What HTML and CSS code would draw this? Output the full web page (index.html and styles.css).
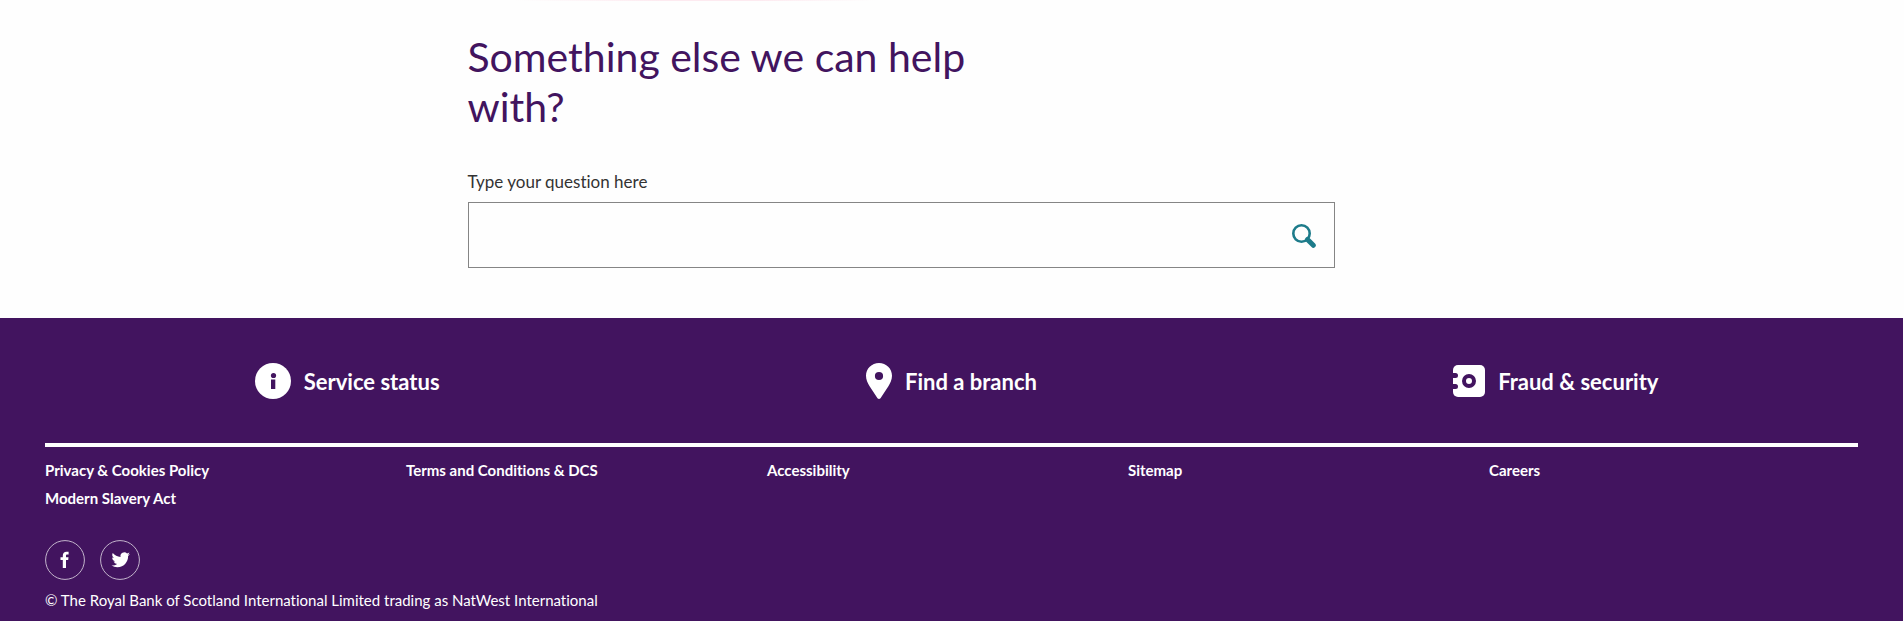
FILE: index.html
```html
<!DOCTYPE html>
<html lang="en">
<head>
<meta charset="utf-8">
<meta name="viewport" content="width=device-width, initial-scale=1">
<title>Support Centre</title>
<link rel="stylesheet" href="styles.css">
</head>
<body>
<main class="support">
  <form class="search">
    <h2 class="search-title">Something else we can help with?</h2>
    <label class="search-label" for="question">Type your question here</label>
    <div class="search-box">
      <input class="search-input" id="question" type="text">
      <button class="search-button" type="submit" aria-label="Search">
        <svg width="24" height="24" viewBox="0 0 24 24" aria-hidden="true"><circle cx="9.500" cy="9.500" r="8.200" fill="none" stroke="#1d7b8a" stroke-width="2.600"/><path d="M15.500 15.500l5.800 5.800" fill="none" stroke="#1d7b8a" stroke-width="5" stroke-linecap="round"/></svg>
      </button>
    </div>
  </form>
</main>
<footer class="footer">
  <nav class="quick" aria-label="Quick links">
    <a class="quick-link" href="#">
      <svg width="36" height="36" viewBox="0 0 36 36" aria-hidden="true"><circle cx="18" cy="18" r="18" fill="#fff"/><circle cx="18.500" cy="12.500" r="2.600" fill="#42145f"/><path d="M16 16.500h4.300v9.500h-4.300z" fill="#42145f"/></svg>
      Service status
    </a>
    <a class="quick-link" href="#">
      <svg width="26" height="36" viewBox="0 0 26 36" aria-hidden="true"><path fill="#fff" fill-rule="evenodd" d="M13 0C5.800 0 0 5.600 0 12.800c0 3.700 1.600 7.200 3.600 10.500L11.500 35.300q1.500 1.400 3 0L22.400 23.300c2-3.300 3.600-6.800 3.600-10.500C26 5.600 20.200 0 13 0zm0 8.900a4.100 4.100 0 1 1 0 8.200 4.100 4.100 0 0 1 0-8.200z"/></svg>
      Find a branch
    </a>
    <a class="quick-link" href="#">
      <svg width="32" height="32" viewBox="0 0 32 32" aria-hidden="true"><rect width="32" height="32" rx="5" fill="#fff"/><path d="M0 8h2.500a1.500 1.500 0 0 1 0 5H0zM0 19h2.500a1.500 1.500 0 0 1 0 5H0z" fill="#42145f"/><circle cx="16" cy="16" r="5" fill="#fff" stroke="#42145f" stroke-width="4"/></svg>
      Fraud &amp; security
    </a>
  </nav>
  <nav class="legal" aria-label="Legal">
    <a class="legal-link" href="#">Privacy &amp; Cookies Policy</a>
    <a class="legal-link" href="#">Terms and Conditions &amp; DCS</a>
    <a class="legal-link" href="#">Accessibility</a>
    <a class="legal-link" href="#">Sitemap</a>
    <a class="legal-link" href="#">Careers</a>
    <a class="legal-link" href="#">Modern Slavery Act</a>
  </nav>
  <div class="social">
    <a class="social-link" href="#" aria-label="Facebook">
      <svg width="40" height="40" viewBox="0 0 40 40" aria-hidden="true"><circle cx="20" cy="20" r="19.400" fill="none" stroke="#c3b5cc" stroke-width="1"/><path fill="#fff" d="M17.800 28v-8h-2.300v-2.700h2.300v-1.600c0-2.600 1.400-3.900 3.800-3.900h2v2.700h-1.300c-1 0-1.300.5-1.300 1.300v1.500h2.500l-.3 2.700H21V28z"/></svg>
    </a>
    <a class="social-link" href="#" aria-label="Twitter">
      <svg width="40" height="40" viewBox="0 0 40 40" aria-hidden="true"><circle cx="20" cy="20" r="19.400" fill="none" stroke="#c3b5cc" stroke-width="1"/><path fill="#fff" transform="translate(11.500 10.500) scale(.77)" d="M23.950 4.570a10 10 0 0 1-2.820.77 4.960 4.960 0 0 0 2.160-2.720c-.95.550-2 .950-3.130 1.180a4.920 4.920 0 0 0-8.380 4.480C7.690 8.090 4.070 6.130 1.640 3.160a4.820 4.820 0 0 0-.67 2.480c0 1.710.87 3.210 2.190 4.100a4.900 4.900 0 0 1-2.230-.62v.06a4.920 4.920 0 0 0 3.950 4.830 5 5 0 0 1-2.210.08 4.940 4.940 0 0 0 4.600 3.420A9.870 9.870 0 0 1 0 19.540a14 14 0 0 0 7.550 2.210c9.050 0 14-7.500 14-13.980 0-.21 0-.42-.02-.63a9.940 9.940 0 0 0 2.460-2.550z"/></svg>
    </a>
  </div>
  <p class="copyright">© The Royal Bank of Scotland International Limited trading as NatWest International</p>
</footer>
</body>
</html>
```
FILE: styles.css
```css
* {
  box-sizing: border-box;
}

body {
  margin: 0;
  padding-right: 1px;
  background: #fefefe;
  color: #333;
  font-family: Lato, "Open Sans", sans-serif;
  font-variant-ligatures: none;
}

.support {
  max-width: 968px;
  margin: 0 auto;
  padding: 32px 0 50px;
  background: linear-gradient(90deg, #fefefe 5%, #fdeaf0 20% 30%, #fefefe 42%) top / 100% 1px no-repeat;
}

.search {
  max-width: 867px;
}

.search-title {
  max-width: 560px;
  margin: 0 0 38px;
  color: #42145f;
  font-size: 41px;
  font-weight: 400;
  line-height: 50px;
}

.search-label {
  display: block;
  margin-bottom: 8px;
  font-size: 17px;
  line-height: 24px;
}

.search-box {
  display: flex;
  height: 66px;
  border: 1px solid #858585;
  background: #fefefe;
}

.search-input {
  flex: 1;
  min-width: 0;
  padding: 0 16px;
  border: 0;
  background: none;
  font: inherit;
}

.search-button {
  display: flex;
  align-items: center;
  padding: 2px 18px 0;
  border: 0;
  background: none;
  cursor: pointer;
}

.footer {
  padding: 45px 45px 11px;
  background: #42145f;
  color: #fff;
  font-size: 15px;
}

.footer a {
  color: #fff;
  text-decoration: none;
}

.quick {
  display: grid;
  grid-template-columns: repeat(3, 1fr);
  padding-bottom: 44px;
  border-bottom: 4px solid #fff;
}

.quick-link {
  display: flex;
  align-items: center;
  justify-content: center;
  gap: 13px;
  height: 36px;
  font-size: 22px;
  font-weight: 700;
}

.legal {
  display: grid;
  grid-template-columns: repeat(5, 1fr);
  padding: 9px 8px 28px 0;
}

.legal-link {
  font-weight: 700;
  line-height: 28px;
}

.social {
  display: flex;
  gap: 15px;
}

.social-link {
  display: flex;
}

.copyright {
  margin: 10px 0 0;
  line-height: 20px;
}
```
